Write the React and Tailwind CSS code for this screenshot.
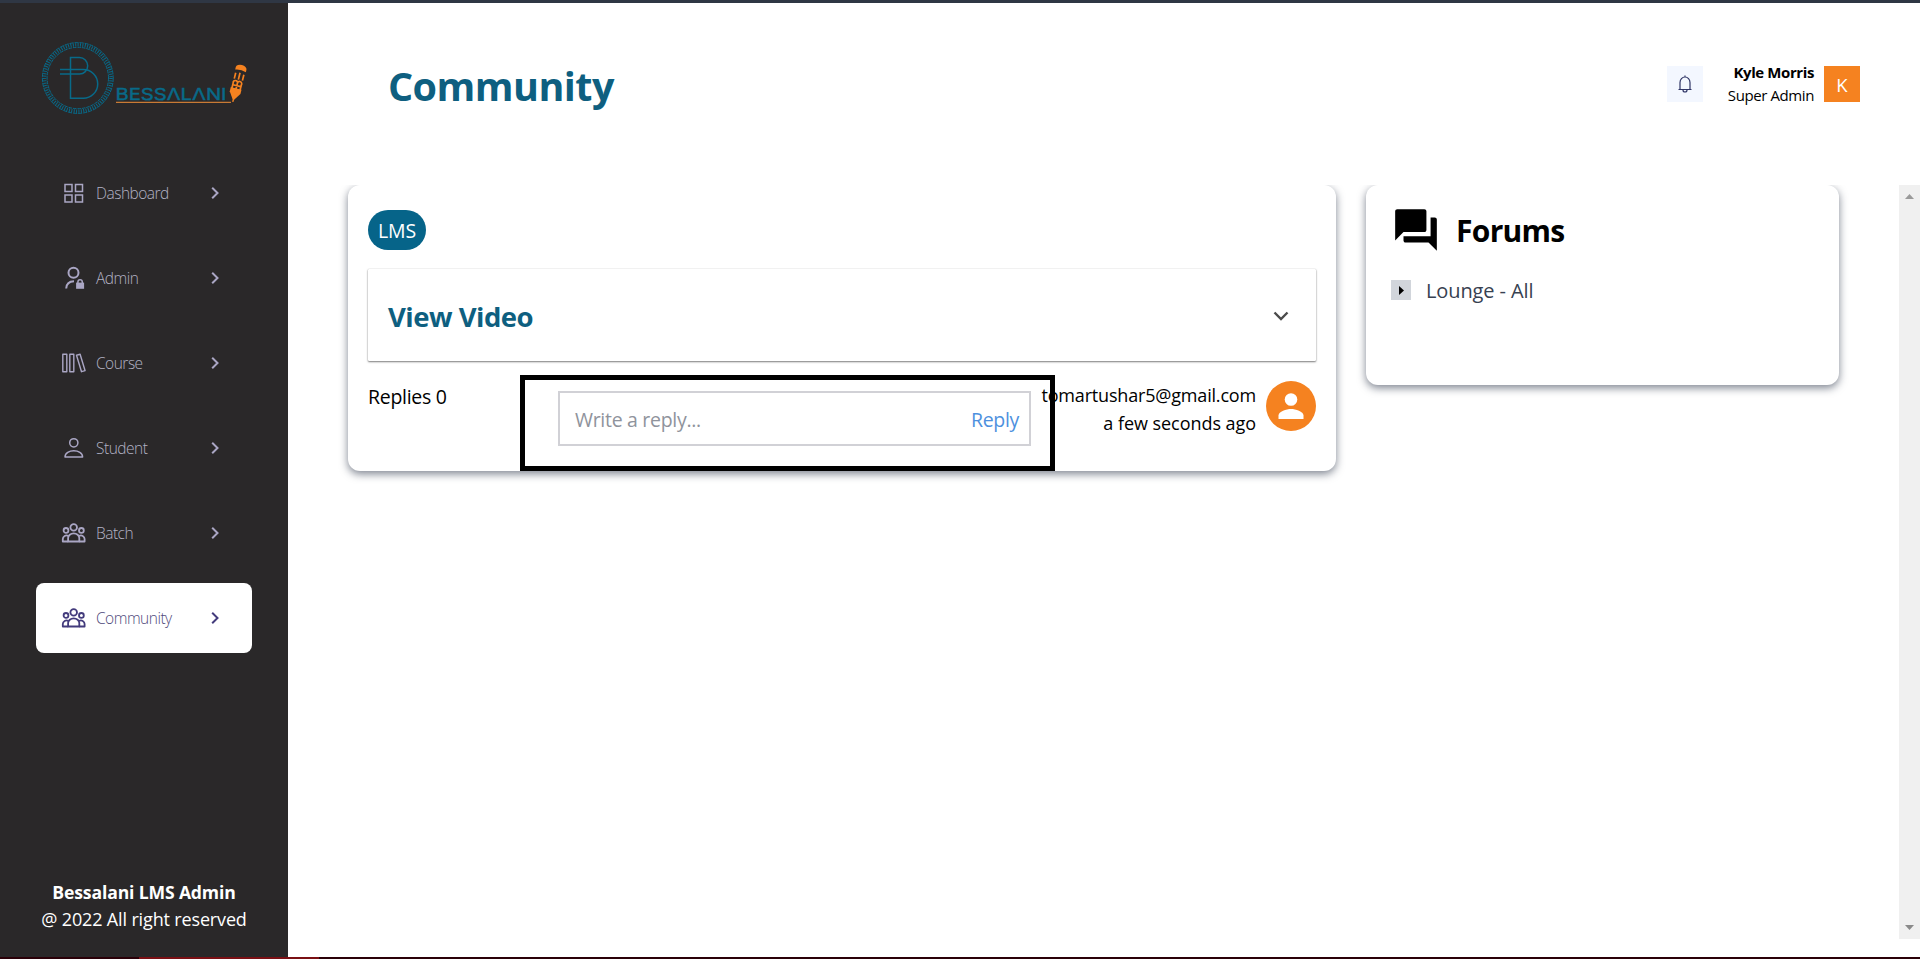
const ICONS = {
  dashboard: (
    <g fill="none" stroke="currentColor" strokeWidth="1.5">
      <path d="M3 1.500h7v7H3zM13.500 1.500h7v7h-7zM3 12h7v7H3zM13.500 12h7v7h-7z" />
    </g>
  ),
  admin: (
    <g fill="none" stroke="currentColor" strokeWidth="2">
      <circle cx="11.5" cy="4.8" r="5" />
      <path d="M4.200 20.500c.2-4.600 3-7.200 7.800-7.300" />
      <path d="M14.100 14.600h8v6.200h-8z" fill="currentColor" stroke="none" />
      <path d="M15.900 15v-1a2.200 2.200 0 0 1 4.400 0v1" strokeWidth="1.5" />
    </g>
  ),
  course: (
    <g fill="none" stroke="currentColor" strokeWidth="1.4" strokeLinejoin="round">
      <path d="M.8 1.200h4v17.600h-4zM7.800 1.200h4v17.600h-4zM14.500 2.200l3.600-.9 5 16.400-3.600 1z" />
    </g>
  ),
  student: (
    <g fill="none" stroke="currentColor" strokeWidth="1.5" strokeLinejoin="round">
      <circle cx="11.8" cy="4.8" r="4.1" />
      <path d="M3 19c0-8.400 17.600-8.400 17.600 0z" />
    </g>
  ),
  group: (
    <g fill="none" stroke="currentColor" strokeWidth="1.8" strokeLinejoin="round">
      <circle cx="11.7" cy="4.4" r="3.3" />
      <circle cx="4" cy="7.400" r="2.4" />
      <circle cx="19.4" cy="7.400" r="2.4" />
      <path d="M6.100 18.500v-3.500a5.600 4.600 0 0 1 11.200 0v3.500z" />
      <path d="M6.100 18.500H.8v-2.400a3.600 3.600 0 0 1 5.500-3.100M17.300 18.500h5.300v-2.400a3.600 3.600 0 0 0-5.500-3.100" />
    </g>
  ),
};

const NAV = [
  { label: "Dashboard", icon: "dashboard" },
  { label: "Admin", icon: "admin" },
  { label: "Course", icon: "course" },
  { label: "Student", icon: "student" },
  { label: "Batch", icon: "group" },
  { label: "Community", icon: "group", active: true },
];

function Logo() {
  return (
    <svg className="ml-10 mt-[37px] block h-[78px] w-[212px] shrink-0" viewBox="40 40 212 78">
      <g fill="none" stroke="#086a89">
        <circle cx="77.8" cy="78" r="35.4" strokeWidth="1" strokeDasharray="4.200 .9" />
        <circle cx="77.8" cy="78" r="33.2" strokeWidth="3.400" strokeDasharray="1 1.400" />
        <circle cx="77.8" cy="78" r="30.7" strokeWidth="1" strokeDasharray="3.600 .9" />
        <path
          strokeWidth="1.500"
          d="M60 74H79.500a8.200 8.200 0 0 0 0-16.400H70.500V98.300H83.300a14.400 14.400 0 0 0 0-28.800H60"
        />
      </g>
      <text
        x="115.5"
        y="100"
        fill="#086a89"
        stroke="#086a89"
        strokeWidth=".4"
        className="font-['Inter',sans-serif] text-[16px]"
        textLength="111"
        lengthAdjust="spacingAndGlyphs"
      >
        BESS&#923;L&#923;NI
      </text>
      <path d="M116 102.400h115" stroke="#c87a35" strokeWidth="1.200" />
      <g transform="translate(237.500 83) rotate(14)">
        <path d="M-5.500-12.500v-2.500a5.500 3.500 0 0 1 11 0v2.500q-5.500-2-11 0z" fill="#f58220" />
        <path
          d="M-4.200-9.500v6M4.200-9.500v6M0-10.500v7M-4.200 6.500v-5.500a2 2 0 0 1 4.200-1.500a2 2 0 0 1 4.200 1.500v5.500M-4 2.800h8M0-.5v7"
          fill="none"
          stroke="#f58220"
          strokeWidth="1.700"
        />
        <path d="M-5.500 5.500h11v4.500L.8 17h-1.600l-4.700-7z" fill="#f58220" />
        <path d="M0 16.500v3" stroke="#f58220" strokeWidth="1.400" />
      </g>
    </svg>
  );
}

function NavItem({ label, icon, active }) {
  return (
    <a
      className={
        "flex h-[70px] w-[216px] items-center rounded-lg pl-[25.5px] " +
        (active ? "bg-white text-[#433b7c]" : "text-[#aaa6c4]")
      }
    >
      <svg className="h-6 w-6 overflow-visible" viewBox="0 -2 24 24">
        {ICONS[icon]}
      </svg>
      <span
        className={
          "ml-[10.5px] mt-0.5 w-[114.500px] text-[15.500px] font-light tracking-[-0.500px] " +
          (active ? "text-[#4f4a7c]" : "text-[#b2b2c4]")
        }
      >
        {label}
      </span>
      <svg className="h-3 w-2" viewBox="0 0 8 12" fill="none" stroke="currentColor" strokeWidth="2">
        <path d="M1.200 .8L6.500 6l-5.300 5.200" />
      </svg>
    </a>
  );
}

function Sidebar() {
  return (
    <aside className="flex w-72 shrink-0 flex-col bg-[#2a2829]">
      <Logo />
      <nav className="ml-9 mt-10 flex flex-col gap-[15px]">
        {NAV.map((item) => (
          <NavItem key={item.label} {...item} />
        ))}
      </nav>
      <div className="mt-auto mb-6 text-center text-[18px] leading-[27px] text-white">
        <p className="text-[17.6px] font-bold tracking-[-0.15px]">Bessalani LMS Admin</p>
        <p className="tracking-[-0.15px]">@ 2022 All right reserved</p>
      </div>
    </aside>
  );
}

function Header() {
  return (
    <header className="flex h-[182px] shrink-0 items-start pl-[100px] pr-[60px]">
      <h1 className="mt-[53px] text-[39.5px] font-bold leading-[60px] tracking-[-0.55px] text-[#0e5f80]">
        Community
      </h1>
      <div className="ml-auto mt-[63px] flex items-start">
        <div className="flex h-9 w-9 items-center justify-center bg-[#f3f7ff]">
          <svg className="h-[18px] w-[14px]" viewBox="0 0 14 18" fill="none" stroke="#2f3566" strokeWidth="1.2">
            <path d="M.5 14.500h13M2 14.500V7.500a5 5.500 0 0 1 10 0v7M7 2V.5M5 15a2 2 0 0 0 4 0" />
          </svg>
        </div>
        <div className="-mt-[5px] w-[111px] text-right text-[15px] leading-[22.5px] text-black">
          <p className="font-bold tracking-[-0.4px]">Kyle Morris</p>
          <p className="tracking-[-0.4px]">Super Admin</p>
        </div>
        <div className="ml-2.5 flex h-9 w-9 items-center justify-center bg-[#f58220] pt-0.5 text-[18.500px] text-white">
          K
        </div>
      </div>
    </header>
  );
}

function PostCard() {
  return (
    <section className="relative h-[286px] w-[988px] shrink-0 rounded-[12px] bg-white px-5 pt-[25px] shadow-[0_3px_8px_rgba(40,50,70,0.6)]">
      <div className="flex h-10 w-[58px] items-center justify-center rounded-full bg-[#066489] pt-0.5 text-[19.5px] tracking-[-0.2px] text-white">
        LMS
      </div>
      <div className="mt-[19px] flex h-[92px] items-center justify-between rounded-[1px] bg-white pl-5 pr-[27px] pt-[2px] shadow-[0_1px_2px_rgba(0,0,0,0.5),0_0_1px_rgba(0,0,0,0.3)]">
        <h2 className="mt-0.5 text-[27.5px] font-bold tracking-[-0.5px] text-[#0e5f80]">View Video</h2>
        <svg className="h-4 w-4" viewBox="0 0 16 16" fill="none" stroke="#4b4b4b" strokeWidth="2.4">
          <path d="M1.500 4.500L8 11l6.500-6.500" />
        </svg>
      </div>
      <div className="flex items-start text-[19.5px] text-black">
        <p className="mt-[22px] w-[190px] leading-[28px] tracking-[-0.3px]">Replies 0</p>
        <div className="mt-[30px] flex h-[55px] w-[473px] shrink-0 items-center justify-between border-2 border-[#d1d1d6] pl-[15px] pr-2.5 pt-0.5 tracking-[-0.3px]">
          <span className="text-[#8f939c]">Write a reply...</span>
          <span className="text-[#4d90de]">Reply</span>
        </div>
        <div className="mt-5 flex w-[285px] justify-end">
          <div className="text-right text-[18px] leading-[28px]">
            <p className="tracking-[-0.18px]">tomartushar5@gmail.com</p>
            <p className="tracking-[-0.05px]">a few seconds ago</p>
          </div>
          <svg className="ml-2.5 h-[50px] w-[50px] shrink-0" viewBox="0 0 50 50">
            <circle cx="25" cy="25" r="25" fill="#f58220" />
            <circle cx="25" cy="18.500" r="6.300" fill="#fff" />
            <path d="M12.500 38v-3.500c0-4 8-6.500 12.500-6.500s12.500 2.500 12.500 6.500V38z" fill="#fff" />
          </svg>
        </div>
      </div>
      <div className="absolute left-[172px] top-[190px] h-[96px] w-[535px] border-5 border-black" />
    </section>
  );
}

function ForumsCard() {
  return (
    <section className="h-[200px] w-[473px] shrink-0 rounded-[12px] bg-white pl-[25px] pt-5 shadow-[0_3px_8px_rgba(40,50,70,0.6)]">
      <div className="flex h-[50px] items-center">
        <svg className="h-[50px] w-[50px]" viewBox="0 0 24 24" fill="#000">
          <path d="M21 6h-2v9H6v2c0 .55.45 1 1 1h11l4 4V7c0-.55-.45-1-1-1zm-4 6V3c0-.55-.45-1-1-1H3c-.55 0-1 .45-1 1v14l4-4h10c.55 0 1-.45 1-1z" />
        </svg>
        <h2 className="ml-[15px] mt-px text-[30px] font-bold tracking-[-0.7px] text-black">Forums</h2>
      </div>
      <div className="mt-5 flex h-[30px] items-center text-[20px] leading-[30px] text-[#374151]">
        <div className="flex h-5 w-5 items-center justify-center bg-[#d1d5db]">
          <svg className="h-[9px] w-[5px]" viewBox="0 0 5 9" fill="#000">
            <path d="M0 0l5 4.500L0 9z" />
          </svg>
        </div>
        <span className="ml-[15px] mt-0.5 tracking-[-0.1px]">Lounge - All</span>
      </div>
    </section>
  );
}

function Scrollbar() {
  return (
    <div className="ml-auto flex h-full w-[21px] flex-col items-center justify-between bg-[#f0f0f0] py-[9px]">
      <svg className="h-[5px] w-[9px]" viewBox="0 0 9 5" fill="#9a9a9a">
        <path d="M0 5L4.500 0 9 5z" />
      </svg>
      <svg className="h-[5px] w-[9px]" viewBox="0 0 9 5" fill="#8a8a8a">
        <path d="M0 0l4.500 5L9 0z" />
      </svg>
    </div>
  );
}

export default function App() {
  return (
    <div className="flex h-[959px] w-[1920px] flex-col overflow-hidden bg-white font-['Open_Sans',sans-serif]">
      <div className="h-[3px] shrink-0 bg-[#2f3744]" />
      <div className="flex h-[954px]">
        <Sidebar />
        <main className="flex flex-1 flex-col">
          <Header />
          <div className="flex h-[754px] items-start gap-[30px] overflow-hidden pl-[60px]">
            <PostCard />
            <ForumsCard />
            <Scrollbar />
          </div>
        </main>
      </div>
      <div className="flex h-[2px] bg-[#2a0008]">
        <div className="ml-[139px] w-[180px] bg-[#7a1014]" />
      </div>
    </div>
  );
}
